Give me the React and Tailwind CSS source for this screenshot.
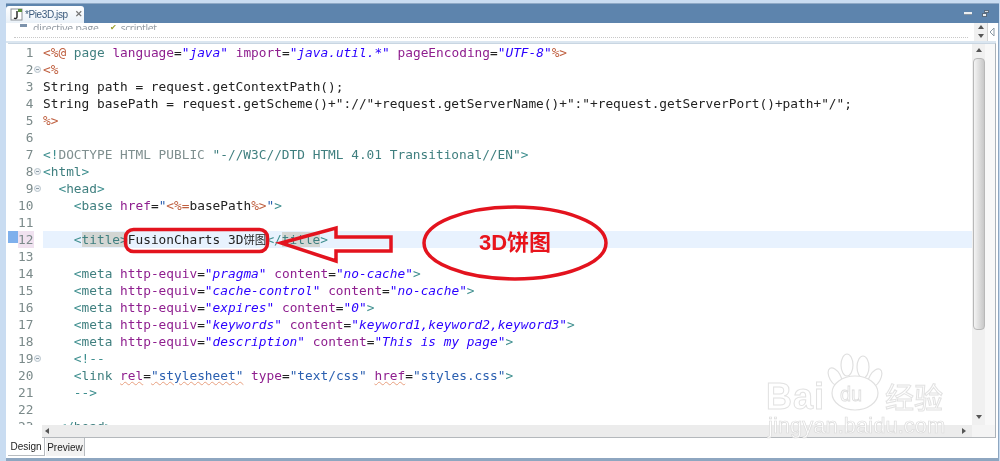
import { Fragment } from 'react'

const tag = 'text-[#3f8f8f]'
const name = 'text-[#3f7f7f]'
const attr = 'text-[#8f1f8f]'
const val = 'text-[#2a00ff] italic'
const val2 = 'text-[#2a5fb0]'
const jsp = 'text-[#bf5f3f]'
const plain = 'text-[#222]'
const gray = 'text-[#7f8f8f]'
const mark = 'text-[#3f7f7f] bg-[#d3d6d3]'
const cjk = 'text-[#222] text-[11.5px]'
const wavy = ' underline decoration-wavy decoration-[#e8a080] decoration-1'

const metaLine = (equiv, content) => [
  ['    '],
  ['<', tag], ['meta', name], [' '], ['http-equiv', attr], ['=', plain], [`"${equiv}"`, val], [' '],
  ['content', attr], ['=', plain], [`"${content}"`, val], ['>', tag],
]

const LINES = [
  [['<%@', jsp], [' '], ['page', name], [' '], ['language', attr], ['=', plain], ['"java"', val], [' '], ['import', attr], ['=', plain], ['"java.util.*"', val], [' '], ['pageEncoding', attr], ['=', plain], ['"UTF-8"', val], ['%>', jsp]],
  [['<%', jsp]],
  [['String path = request.getContextPath();', plain]],
  [['String basePath = request.getScheme()+"://"+request.getServerName()+":"+request.getServerPort()+path+"/";', plain]],
  [['%>', jsp]],
  [],
  [['<!', tag], ['DOCTYPE HTML PUBLIC', gray], [' "-//W3C//DTD HTML 4.01 Transitional//EN"', name], ['>', tag]],
  [['<', tag], ['html', name], ['>', tag]],
  [['  '], ['<', tag], ['head', name], ['>', tag]],
  [['    '], ['<', tag], ['base', name], [' '], ['href', attr], ['=', plain], ['"', val2], ['<%=', jsp], ['basePath', plain], ['%>', jsp], ['"', val2], ['>', tag]],
  [],
  [['    '], ['<', tag], ['title', mark], ['>', mark], ['FusionCharts 3D', plain], ['饼图', cjk], ['</', tag], ['title', mark], ['>', tag]],
  [],
  metaLine('pragma', 'no-cache'),
  metaLine('cache-control', 'no-cache'),
  metaLine('expires', '0'),
  metaLine('keywords', 'keyword1,keyword2,keyword3'),
  metaLine('description', 'This is my page'),
  [['    '], ['<!--', tag]],
  [['    '], ['<', tag], ['link', name], [' '], ['rel', attr + wavy], ['=', plain], ['"stylesheet"', val2 + wavy], [' '], ['type', attr], ['=', plain], ['"text/css"', val2], [' '], ['href', attr + wavy], ['=', plain], ['"styles.css"', val2], ['>', tag]],
  [['    '], ['-->', tag]],
  [],
  [['  '], ['</', tag], ['head', name], ['>', tag]],
]

const FOLDS = [2, 8, 9, 19]

function Fold() {
  return (
    <span className="absolute left-[34px] top-[5px] w-[7px] h-[7px] rounded-full border border-[#b8c4cc] bg-[#eef2f5] flex items-center justify-center">
      <span className="w-[3px] h-px bg-[#8a99a5]" />
    </span>
  )
}

function Gutter() {
  return (
    <div className="w-[34px] shrink-0 bg-white flex">
      <div className="w-[10px] bg-[#f1f1f1] relative">
        <div className="absolute left-0 top-[187px] w-[10px] h-[12px] bg-[#7fb0ec]" />
      </div>
    </div>
  )
}

function LineNumbers() {
  return (
    <div className="absolute left-0 top-0 w-[43px]">
      {LINES.map((_, i) => (
        <div key={i} className="relative h-[17px]">
          <div className={'absolute left-[18px] w-[16px] h-[17px] pr-[0.5px] text-right text-[#7b8a8a] leading-[17px] whitespace-nowrap flex justify-end ' + (i === 11 ? 'bg-[#f0e2f0]' : '')}>
            {i + 1}
          </div>
          {FOLDS.includes(i + 1) && <Fold />}
        </div>
      ))}
    </div>
  )
}

function Code() {
  return (
    <div className="relative flex-1 overflow-hidden font-['DejaVu_Sans_Mono','Noto_Sans_CJK_SC',monospace] text-[12.8px]">
      <LineNumbers />
      <div className="pl-[43px]">
        {LINES.map((segs, i) => (
          <div key={i} className={'h-[17px] leading-[17px] whitespace-pre ' + (i === 11 ? 'bg-[#e8f2fe]' : '')}>
            {segs.map(([t, c], j) => (
              <Fragment key={j}>{c ? <span className={c}>{t}</span> : t}</Fragment>
            ))}
          </div>
        ))}
      </div>
    </div>
  )
}

function Arrow({ dir, className }) {
  const d = { up: 'M0 4L3 0L6 4Z', down: 'M0 0L6 0L3 4Z', left: 'M4 0L4 6L0 3Z', right: 'M0 0L4 3L0 6Z' }[dir]
  return (
    <svg width="6" height="6" viewBox="0 0 6 6" className={className}>
      <path d={d} fill="#555" />
    </svg>
  )
}

function VScroll() {
  return (
    <div className="w-[13px] shrink-0 bg-[#f0f0f0] flex flex-col items-center">
      <div className="h-[14px] shrink-0 flex items-center justify-center">
        <Arrow dir="up" />
      </div>
      <div className="w-[12px] h-[272px] border border-[#b8b8b8] rounded-sm bg-gradient-to-r from-[#f4f4f4] to-[#c8c8c8]" />
      <div className="flex-1" />
      <div className="h-[14px] shrink-0 flex items-center justify-center">
        <Arrow dir="down" />
      </div>
    </div>
  )
}

function Watermark() {
  return (
    <div className="absolute left-[766px] top-[352px] w-[184px] h-[86px] font-['Liberation_Sans',sans-serif] text-white/90">
      <svg width="60" height="62" viewBox="0 0 60 62" className="absolute left-[60px] top-0" fill="#fff" stroke="#e0e0e0" strokeWidth="1.2">
        <ellipse cx="21" cy="13" rx="6" ry="11" />
        <ellipse cx="37" cy="15" rx="6" ry="11" />
        <ellipse cx="9" cy="25" rx="5.5" ry="10" transform="rotate(-30 9 25)" />
        <ellipse cx="49" cy="26" rx="5.5" ry="10" transform="rotate(30 49 26)" />
        <ellipse cx="29" cy="41" rx="23" ry="17" />
      </svg>
      <div className="absolute left-0 top-[27px] text-[36px] leading-[36px] font-bold tracking-[1px] [-webkit-text-stroke:1px_#e2e2e2]">Bai</div>
      <div className="absolute left-[74px] top-[31px] text-[20px] leading-[22px] [-webkit-text-stroke:0.8px_#dcdcdc]">du</div>
      <div className="absolute left-[119px] top-[29px] text-[29px] leading-[30px] font-['Noto_Sans_CJK_SC',sans-serif] [-webkit-text-stroke:1px_#e2e2e2]">经验</div>
      <div className="absolute left-[2px] top-[63px] text-[22px] leading-[22px] whitespace-nowrap [-webkit-text-stroke:0.7px_#dadada]">jingyan.baidu.com</div>
    </div>
  )
}

function Annotations() {
  return (
    <>
      <svg width="1000" height="461" viewBox="0 0 1000 461" className="absolute left-0 top-0" fill="none" stroke="#e3131e" strokeWidth="3.5">
        <rect x="125.5" y="229.5" width="142" height="22" rx="8" />
        <path d="M281 243L336 228V237H391V251H336V261Z" strokeLinejoin="miter" />
        <ellipse cx="515" cy="243" rx="91" ry="36" />
      </svg>
      <div className="absolute left-[479px] top-[226px] text-[22px] leading-[33px] font-bold text-[#e8141c] font-['Liberation_Sans','Noto_Sans_CJK_SC',sans-serif] whitespace-nowrap">
        3D饼图
      </div>
    </>
  )
}

export default function App() {
  return (
    <div className="relative w-[1000px] h-[461px] overflow-hidden bg-[#c9dcf1] pt-[3px] pl-[6px] pr-[1px] flex flex-col blur-[0.4px]">
      {/* editor title bar */}
      <div className="h-[20px] shrink-0 bg-[#5d84ad] border-t border-[#8fa9c6] flex items-end justify-between pr-[10px]">
        <div className="w-[78px] h-[17px] bg-gradient-to-b from-white to-[#eaf1f8] rounded-t-[3px] flex items-center pl-[4px] gap-[2px] text-[10px] tracking-[-0.4px] text-[#3a5a7c] font-['Liberation_Sans',sans-serif]">
          <svg width="13" height="13" viewBox="0 0 13 13" className="shrink-0">
            <rect x="1" y="1" width="11" height="11" fill="#fff" stroke="#8a8f96" />
            <path d="M7 3V9C7 10.5 5.5 11 4 10" stroke="#222" strokeWidth="1.4" fill="none" />
            <rect x="8" y="1" width="4" height="3" fill="#5a8f3a" />
          </svg>
          <span className="whitespace-nowrap">*Pie3D.jsp</span>
          <span className="ml-[5px] text-[#777] text-[9px] leading-none font-bold">✕</span>
        </div>
        <div className="flex items-center gap-[10px] self-center">
          <div className="w-[8px] h-[3px] bg-[#eceff2] border-b border-[#8894a0]" />
          <div className="relative w-[7px] h-[7px]">
            <div className="absolute right-0 top-0 w-[5px] h-[3px] bg-[#d6dbe0] border border-[#596b7e]" />
            <div className="absolute left-0 bottom-0 w-[5px] h-[4px] bg-[#eceff2] border border-[#596b7e]" />
          </div>
        </div>
      </div>

      <div className="flex-1 min-h-0 bg-white flex flex-col pr-[2px] border-r border-[#8ea6c0]">
        {/* breadcrumb */}
        <div className="h-[18px] shrink-0 flex">
          <div className="flex-1 relative overflow-hidden ml-[8px] border-b border-dotted border-[#c8c8c8] mb-[3px] mr-[6px]">
            <div className="h-[7px] overflow-hidden flex items-start pl-[6px] gap-[3px] text-[10.5px] leading-[12px] text-[#9098a0] font-['Open_Sans',sans-serif] -mt-[2px] pt-[2px] box-content">
              <span className="w-[7px] h-[3px] mt-[1px] bg-[#7d93ac] shrink-0" />
              <span className="ml-[3px] -mt-[1px] tracking-[-0.2px]">directive.page</span>
              <span className="ml-[8px] text-[#9aa030] text-[8px] leading-[8px]">✔</span>
              <span className="ml-[1px] -mt-[1px] tracking-[-0.4px]">scriptlet</span>
            </div>
          </div>
          <div className="w-[13px] bg-[#f0f0f0] flex flex-col items-center justify-center gap-[3px]">
            <Arrow dir="up" />
            <Arrow dir="down" />
          </div>
          <div className="w-[9px] border-l border-[#d4d4d4] flex items-center justify-center">
            <svg width="6" height="10" viewBox="0 0 6 10">
              <path d="M5 1L1 5L5 9Z" fill="#fff" stroke="#8b99a5" />
            </svg>
          </div>
        </div>
        <div className="h-[2px] shrink-0 bg-[#dbe6f0]" />

        {/* source view */}
        <div className="flex-1 min-h-0 ml-[2px] border-t border-[#c9d6e2] border-r border-r-[#aab2ba] flex flex-col">
          <div className="flex-1 min-h-0 flex relative">
            <div className="absolute left-0 top-0 bottom-0 z-0">
              <Gutter />
            </div>
            <div className="flex-1 min-w-0 relative -ml-[8px]">
              <div className="absolute inset-0 flex">
                <Code />
              </div>
            </div>
            <VScroll />
            <div className="w-[10px] shrink-0 bg-[#f8f8f8]" />
          </div>
          <div className="h-[13px] shrink-0 pl-[34px] flex">
            <div className="flex-1 bg-[#ececec] border-b border-[#b4b8bc] flex items-center justify-between pl-[3px] pr-[4px]">
              <Arrow dir="left" />
              <Arrow dir="right" />
            </div>
            <div className="w-[23px] border-b border-[#b4b8bc] bg-[#f4f4f4]" />
          </div>
        </div>

        {/* design / preview tabs */}
        <div className="h-[20px] shrink-0 flex items-start pl-[2px] gap-[1px] text-[10px] text-[#222] font-['Liberation_Sans',sans-serif]">
          <div className="w-[37px] h-[18px] bg-white border-r border-b border-[#b8bcc0] flex items-center justify-center">Design</div>
          <div className="w-[39px] h-[18px] bg-[#f2f2f2] border-r border-[#b8bcc0] flex items-center justify-center">Preview</div>
        </div>
      </div>
      <div className="h-[3px] shrink-0 bg-[#8ea6c0]" />

      <Annotations />
      <Watermark />
    </div>
  )
}
